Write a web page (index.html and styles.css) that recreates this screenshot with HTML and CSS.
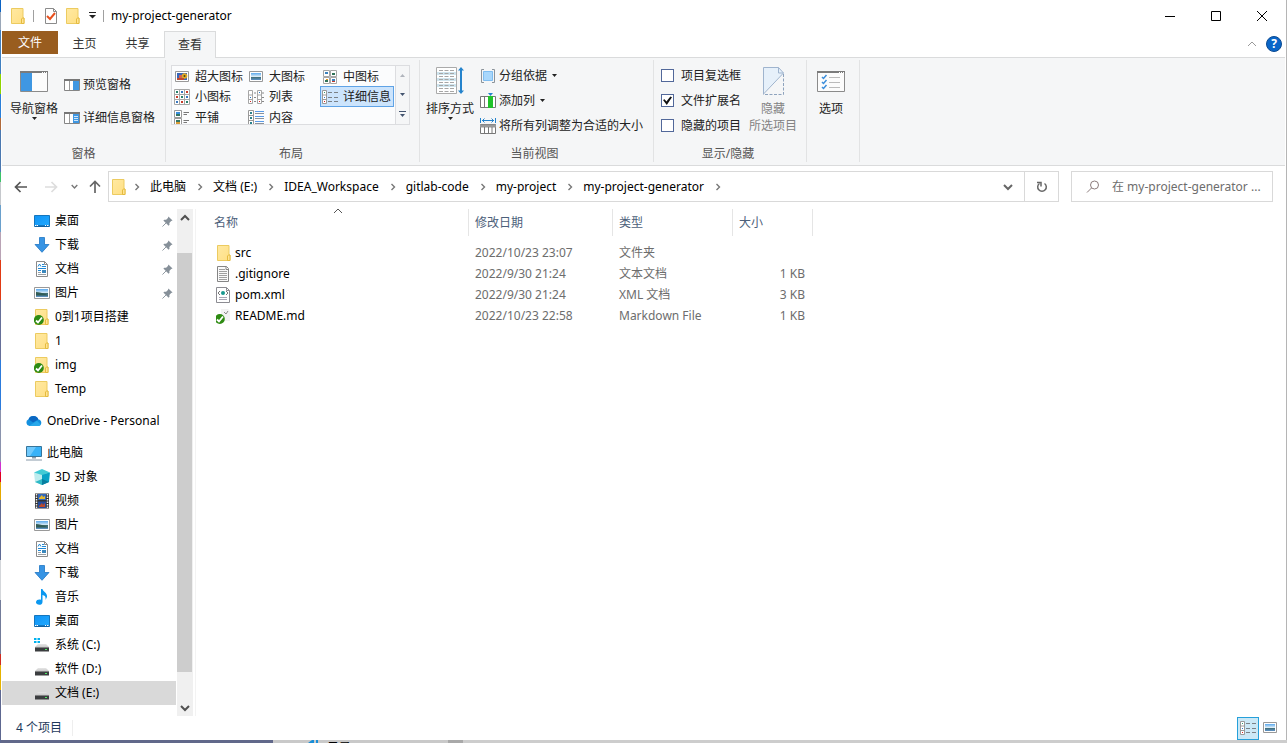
FILE: index.html
```
<!DOCTYPE html>
<html lang="zh-CN">
<head>
<meta charset="utf-8">
<title>my-project-generator</title>
<link rel="stylesheet" href="styles.css">
</head>
<body>
<svg class="sprite" aria-hidden="true">
  <defs>
    <linearGradient id="g-folder" x1="0" y1="0" x2="1" y2="1"><stop offset="0" stop-color="#ffe9a2"/><stop offset="1" stop-color="#ffdf83"/></linearGradient>
    <linearGradient id="g-sky" x1="0" y1="0" x2="0" y2="1"><stop offset="0" stop-color="#5aa9ee"/><stop offset=".5" stop-color="#dcecf5"/><stop offset=".55" stop-color="#3d6a6d"/><stop offset="1" stop-color="#5f93c8"/></linearGradient>
    <linearGradient id="g-desk" x1="0" y1="0" x2="1" y2="1"><stop offset="0" stop-color="#0e93f5"/><stop offset="1" stop-color="#23aaff"/></linearGradient>
    <linearGradient id="g-drive" x1="0" y1="0" x2="0" y2="1"><stop offset="0" stop-color="#e6e6e6"/><stop offset="1" stop-color="#c2c2c2"/></linearGradient>
    <symbol id="folder" viewBox="0 0 16 16"><path d="M1.500 .5h11.500v9.500h1v5.500H1.500z" fill="url(#g-folder)" stroke="#eccb60"/><path d="M11.500 15.500v-4.500l1-1h1.500v5.500z" fill="#ffe494" stroke="#e5bb3f"/></symbol>
    <symbol id="folder-ok" viewBox="0 0 16 16"><use href="#folder"/><use href="#ok"/></symbol>
    <symbol id="ok" viewBox="0 0 16 16"><circle cx="4.800" cy="11" r="5" fill="#2e8b12"/><path d="M2 11.500l2 2 4-5" fill="none" stroke="#fff" stroke-width="1.800"/></symbol>
    <symbol id="desktop" viewBox="0 0 16 16"><path d="M.5 2.500h15v11H.5z" fill="url(#g-desk)" stroke="#1576bd"/><path d="M1 13h14" stroke="#0a4d86"/><path d="M1 12.500h1.500M3 12.500h1M11 12.500h1M13 12.500h1.500" stroke="#fff"/></symbol>
    <symbol id="download" viewBox="0 0 16 16"><path d="M5.500 .5h5v7h4.500L8 15.300 1 7.500h4.500z" fill="#3794e4" stroke="#1f76c4" stroke-width=".8"/></symbol>
    <symbol id="document" viewBox="0 0 16 16"><path d="M2.500 .5h8l3 3v12h-11z" fill="#fff" stroke="#8b8b8b"/><path d="M10.500 .5v3h3" fill="none" stroke="#8b8b8b"/><path d="M4 5.500l1.500-2.500 1.500 2.500M8 3.500h2M8 5.500h4M4 7.500h8M4 9.500h3" stroke="#2089d5" fill="none"/><path d="M8 9h4v3H8z" fill="#3b88bd"/><path d="M4 11.500h3M4 13.500h8" stroke="#9aa0a5"/></symbol>
    <symbol id="picture" viewBox="0 0 16 16"><path d="M.5 2.500h15v11H.5z" fill="#fff" stroke="#999"/><path d="M2 4h12v8H2z" fill="url(#g-sky)"/><path d="M2 7q4 0 12 3v.500H2z" fill="#315c56"/></symbol>
    <symbol id="cloud" viewBox="0 0 16 16"><path d="M3.500 13A3.500 3.500 0 0 1 2.500 6.300 5.300 5.300 0 0 1 12.400 6.500a3.300 3.300 0 0 1 .3 6.500z" fill="#1490df"/><path d="M2.600 6.300A5.300 5.300 0 0 1 12.400 6.500L7 9.500z" fill="#0b67c2"/><path d="M3 13l8-5.300 4 4-2 1.300z" fill="#28a8ea"/></symbol>
    <symbol id="computer" viewBox="0 0 16 16"><path d="M.5 1.500h15v10H.5z" fill="#38b2f8" stroke="#37759a"/><path d="M1 2h9L4 11H1z" fill="#70c9fc"/><path d="M6 12h4v1.500H6zM0 14.500h16v1H0z" fill="#879aaa"/></symbol>
    <symbol id="cube" viewBox="0 0 16 16"><path d="M0 3.500L8 5v11L1 13z" fill="#bdecee"/><path d="M8 5l8-1.500-1 9.500-7 3z" fill="#08a2c5"/><path d="M0 3.500L8 0l8 3.500L8 6z" fill="#42cbd5"/><path d="M1 13l7-3v6z" fill="#2fb9c6"/><path d="M15 13l-7-3v6z" fill="#087e9f"/></symbol>
    <symbol id="video" viewBox="0 0 16 16"><path d="M1 .5h14v15H1z" fill="#343434"/><path d="M4 1h8v6H4z" fill="#3167bd"/><path d="M4 8.500h8V15H4z" fill="#254c9b"/><path d="M5 5l3-3 1 2 2-1v3H5z" fill="#e5b72c"/><path d="M5 13l3-3 1 2 2-2v4H5z" fill="#bc4b2b"/><path d="M2.500 1v14M13.500 1v14" stroke="#eee" stroke-width="1.500" stroke-dasharray="1.500 1"/></symbol>
    <symbol id="music" viewBox="0 0 16 16"><path d="M7 0h1.500c.5 3 5 3.500 4.500 8l-1.500 3C12 7.500 11 6.500 8.500 6v7c0 4-7 3.500-6.500 0 .3-2.300 3-3 5-2.200z" fill="#0b98f0"/></symbol>
    <symbol id="drive" viewBox="0 0 16 16"><path d="M4 7h8l3 3v1H1v-1z" fill="url(#g-drive)"/><path d="M1 10.500h14v4H1z" fill="#3b3d3f"/><path d="M11 12h2v1h-2z" fill="#4ded65"/></symbol>
    <symbol id="drive-win" viewBox="0 0 16 16"><use href="#drive"/><path d="M0 1h2.500v2H0zM3.500 1H6v2H3.500zM0 4h2.500v2H0zM3.500 4H6v2H3.500z" fill="#00b1ee"/></symbol>
    <symbol id="textfile" viewBox="0 0 16 16"><path d="M1.500 .5h9l2 2v13h-11z" fill="#fafafa" stroke="#858585"/><path d="M10 .5v3h3" fill="none" stroke="#858585"/><path d="M3 3.500h6M3 5.500h8M3 7.500h8M3 9.500h8M3 11.500h8M3 13.500h8" stroke="#a0a0a0"/></symbol>
    <symbol id="xmlfile" viewBox="0 0 16 16"><path d="M.5 .5h10l3 3v12H.5z" fill="#fff" stroke="#8c8c92"/><path d="M10.500 .5v3h3" fill="none" stroke="#8c8c92"/><path d="M4 4L2 6l2 2M10 4l2 2-2 2" fill="none" stroke="#777"/><circle cx="7" cy="6" r="2" fill="#1a9990"/><path d="M3 10.500h8M3 12.500h8" stroke="#aaa5b5"/></symbol>
    <symbol id="mdfile" viewBox="0 0 16 16"><path d="M5 1h7l2 2v10H5z" fill="#f2f2f2"/><path d="M8 4l2 2 2-3" fill="none" stroke="#888"/><g transform="translate(-1)"><use href="#ok"/></g></symbol>
    <symbol id="pin" viewBox="0 0 12 12"><path d="M7 .5L11.500 5l-1.500.5-2 2 .2 2-1 1L1.500 5l1-1 2 .2 2-2z" fill="#869099"/><path d="M4.500 7.500L.5 11.500" stroke="#869099"/></symbol>
    <symbol id="chev" viewBox="0 0 8 8"><path d="M2.500 1l3 3-3 3" fill="none" stroke="#777" stroke-width="1.400"/></symbol>
    <symbol id="chev-down" viewBox="0 0 10 10"><path d="M1 3l4 4 4-4" fill="none" stroke="currentColor" stroke-width="2"/></symbol>
    <symbol id="chev-up" viewBox="0 0 10 10"><path d="M1 7l4-4 4 4" fill="none" stroke="currentColor" stroke-width="2"/></symbol>
    <symbol id="chev-up-thin" viewBox="0 0 10 10"><path d="M1 7l4-4 4 4" fill="none" stroke="currentColor"/></symbol>
    <symbol id="tri" viewBox="0 0 5 3"><path d="M0 0h5L2.500 3z" fill="currentColor"/></symbol>
    <symbol id="left" viewBox="0 0 14 14"><path d="M6.500 2L1.500 7l5 5M1.500 7H13" fill="none" stroke="currentColor" stroke-width="1.700"/></symbol>
    <symbol id="right" viewBox="0 0 14 14"><path d="M7.500 2l5 5-5 5M12.500 7H1" fill="none" stroke="currentColor" stroke-width="1.700"/></symbol>
    <symbol id="up" viewBox="0 0 14 14"><path d="M2 6.500l5-5 5 5M7 1.500V13" fill="none" stroke="currentColor" stroke-width="1.700"/></symbol>
    <symbol id="v-details" viewBox="0 0 16 16"><path d="M.5 1.500h4v13h-4zM.5 6h4M.5 10.500h4" fill="#fff" stroke="#9a9a9a"/><path d="M6 3.500h4M12 3.500h4M6 8.500h4M12 8.500h4M6 12.500h4M12 12.500h4" stroke="#7b8187"/><path d="M2 3h1v1H2z" fill="#397"/><path d="M2 8h1v1H2z" fill="#37c"/><path d="M2 12h1v1H2z" fill="#d22"/></symbol>
    <symbol id="v-large" viewBox="0 0 16 16"><path d="M1.500 2.500h13v10h-13z" fill="#fff" stroke="#999"/><path d="M3 4h10v7H3z" fill="url(#g-sky)"/></symbol>
    <symbol id="v-xl" viewBox="0 0 16 16"><path d="M1.500 2.500h13v10h-13z" fill="#fff" stroke="#999"/><path d="M3 4h10v7H3z" fill="#3765b9"/><circle cx="10.500" cy="7" r="2.800" fill="#e0aa24"/><circle cx="10.500" cy="7" r="1" fill="#4b421a"/><path d="M3 9h7v2H3z" fill="#bd4931"/><path d="M5 6h3v3H5z" fill="#d16155"/></symbol>
    <symbol id="v-medium" viewBox="0 0 16 16"><path d="M1.500 1.500h6v6h-6zM8.500 1.500h6v6h-6zM1.500 8.500h6v6h-6zM8.500 8.500h6v6h-6z" fill="#fff" stroke="#a6a6a6"/><path d="M3 3h3v2H3zM10 10h3v2h-3z" fill="#3b82bd"/><path d="M10 4h3v2h-3zM3 11h3v2H3z" fill="#2f7257"/><path d="M4 10h2v1H4z" fill="#e39b23"/><path d="M10 12h3v1h-3z" fill="#c43a2a"/></symbol>
    <symbol id="v-small" viewBox="0 0 16 16"><path d="M.5 .5h15v15H.5zM5.500 .5v15M10.500 .5v15M.5 5.500h15M.5 10.500h15" fill="#fff" stroke="#a6a6a6"/><path d="M2 3h2M7 8h2M12 13h2" stroke="#27806b" stroke-width="2"/><path d="M7 3h2M12 8h2M2 13h2" stroke="#3977c0" stroke-width="2"/><path d="M12 3h2M2 8h2M7 13h2" stroke="#c93b2a" stroke-width="2"/></symbol>
    <symbol id="v-list" viewBox="0 0 16 16"><path d="M.5 1.500h4v13h-4zM.5 6h4M.5 10.500h4M9.500 1.500h4v13h-4zM9.500 6h4M9.500 10.500h4" fill="#fff" stroke="#a6a6a6"/><path d="M6 4h2M6 8.500h2M6 12.500h2M14 4h2M14 8.500h2M14 12.500h2" stroke="#888"/><path d="M2 8h1v1H2zM11 3h1v1h-1z" fill="#27c"/><path d="M2 12h1v1H2zM11 12h1v1h-1z" fill="#d22"/></symbol>
    <symbol id="v-tiles" viewBox="0 0 16 16"><path d="M.5 .5h7v7h-7zM.5 8.500h7v7h-7z" fill="#fff" stroke="#999"/><path d="M2 2h4v2H2z" fill="#398ddd"/><path d="M2 4h4v2H2zM2 10h4v2H2z" fill="#347563"/><path d="M2 12h4v2H2z" fill="#d79b37"/><path d="M9.500 2.500H15M9.500 4.500H13M9.500 10.500H15M9.500 12.500H13" stroke="#777"/></symbol>
    <symbol id="v-content" viewBox="0 0 16 16"><path d="M.5 .5h5v15h-5zM.5 5.500h5M.5 10.500h5" fill="#fff" stroke="#999"/><path d="M2 3h2M2 8h2M2 13h2" stroke="#28808b" stroke-width="2"/><path d="M7 1.500h9M7 6.500h9M7 11.500h9" stroke="#5a9be8"/><path d="M7 3.500h9M7 8.500h9M7 13.500h9" stroke="#8d9299"/></symbol>
  </defs>
</svg>

<div class="window">
  <header class="titlebar">
    <svg class="i16"><use href="#folder"/></svg>
    <span class="bar"></span>
    <div class="quick">
      <button aria-label="属性"><svg class="i16" viewBox="0 0 16 16"><path d="M2.500 .5h8l3 3v12h-11z" fill="#fff" stroke="#8b8b8b"/><path d="M10.500 .5v3h3" fill="none" stroke="#8b8b8b"/><path d="M4 8l3 3 5-6" fill="none" stroke="#e8501e" stroke-width="2"/></svg></button>
      <button aria-label="新建文件夹"><svg class="i16"><use href="#folder"/></svg></button>
      <button class="customize" aria-label="自定义快速访问工具栏"><svg width="7" height="7" viewBox="0 0 7 7"><path d="M0 .5h7" stroke="#222"/><path d="M0 3h7L3.500 6.500z" fill="#222"/></svg></button>
    </div>
    <span class="bar"></span>
    <h1 class="title">my-project-generator</h1>
    <div class="controls">
      <button aria-label="最小化"><svg width="10" height="10"><path d="M0 5.500h10" stroke="#000"/></svg></button>
      <button aria-label="最大化"><svg width="10" height="10"><path d="M.5 .5h9v9h-9z" fill="none" stroke="#000"/></svg></button>
      <button aria-label="关闭"><svg width="10" height="10"><path d="M0 0l10 10M10 0L0 10" stroke="#000"/></svg></button>
    </div>
  </header>

  <nav class="tabs">
    <button class="tab file">文件</button>
    <button class="tab">主页</button>
    <button class="tab">共享</button>
    <button class="tab active">查看</button>
    <div class="tabs-end">
      <button class="collapse" aria-label="最小化功能区"><svg width="10" height="10"><use href="#chev-up-thin"/></svg></button>
      <button class="help" aria-label="帮助">?</button>
    </div>
  </nav>

  <section class="ribbon">
    <div class="group panes">
      <div class="group-body">
        <button class="big">
          <span class="art"><svg width="28" height="21" viewBox="0 0 28 21"><path d="M.5 .5h27v20H.5z" fill="#fcfcfc" stroke="#8b8b8b"/><path d="M0 1h28" stroke="#7b7b7b" stroke-width="2"/><path d="M22 1.500h1M24 1.500h1M26 1.500h1" stroke="#fff"/><path d="M1 2h11v18H1z" fill="#3f97e2"/></svg></span>
          <span>导航窗格</span><svg class="tri"><use href="#tri"/></svg>
        </button>
        <div class="pane-list">
          <button class="row"><svg class="i16" viewBox="0 0 16 16"><path d="M.5 2.500h15v11H.5z" fill="#fff" stroke="#858585"/><path d="M0 3h16" stroke="#777" stroke-width="2"/><path d="M5.500 4v9" stroke="#999"/><path d="M9 4h6v9H9z" fill="#3f97e2"/></svg>预览窗格</button>
          <button class="row"><svg class="i16" viewBox="0 0 16 16"><path d="M.5 2.500h15v11H.5z" fill="#fff" stroke="#858585"/><path d="M0 3h16" stroke="#777" stroke-width="2"/><path d="M5.500 4v9" stroke="#999"/><path d="M9 4h6v9H9z" fill="#3f97e2"/><path d="M10 6.500h4M10 8.500h4M10 10.500h4" stroke="#cfe6fa"/></svg>详细信息窗格</button>
        </div>
      </div>
      <div class="group-label">窗格</div>
    </div>

    <div class="group layout">
      <div class="group-body">
        <div class="gallery">
          <div class="cells">
            <button class="cell"><svg class="i16"><use href="#v-xl"/></svg>超大图标</button>
            <button class="cell"><svg class="i16"><use href="#v-large"/></svg>大图标</button>
            <button class="cell"><svg class="i16"><use href="#v-medium"/></svg>中图标</button>
            <button class="cell"><svg class="i16"><use href="#v-small"/></svg>小图标</button>
            <button class="cell"><svg class="i16"><use href="#v-list"/></svg>列表</button>
            <button class="cell selected"><svg class="i16"><use href="#v-details"/></svg>详细信息</button>
            <button class="cell"><svg class="i16"><use href="#v-tiles"/></svg>平铺</button>
            <button class="cell"><svg class="i16"><use href="#v-content"/></svg>内容</button>
          </div>
          <div class="spin">
            <button class="dim" aria-label="上一行"><svg width="5" height="3" viewBox="0 0 5 3"><path d="M0 3h5L2.500 0z" fill="currentColor"/></svg></button>
            <button aria-label="下一行"><svg width="5" height="3"><use href="#tri"/></svg></button>
            <button aria-label="更多"><svg width="7" height="7" viewBox="0 0 7 7"><path d="M0 .5h7" stroke="currentColor"/><path d="M1 3h5L3.500 6z" fill="currentColor"/></svg></button>
          </div>
        </div>
      </div>
      <div class="group-label">布局</div>
    </div>

    <div class="group view">
      <div class="group-body">
        <button class="big">
          <span class="art"><svg width="28" height="28" viewBox="0 0 28 28"><path d="M.5 .5h20v26H.5z" fill="#fff" stroke="#aaa"/><path d="M1 5h19v3H1zM1 11h19v3H1zM1 17h19v3H1z" fill="#cfe5ef"/><path d="M3 3.500h15M3 6.500h15M3 9.500h15M3 12.500h15M3 15.500h15M3 18.500h15M3 21.500h15M3 24.500h15" stroke="#a6a6a6" stroke-dasharray="4 1.500"/><path d="M25 2v23" stroke="#2583cc" stroke-width="2"/><path d="M22 3.500L25 0l3 3.500zM22 23.500l3 3.500 3-3.500z" fill="#2583cc"/></svg></span>
          <span>排序方式</span><svg class="tri"><use href="#tri"/></svg>
        </button>
        <div class="rows">
          <button class="row"><svg class="i16" viewBox="0 0 16 16"><path d="M4 1.500H1.500v13H4M12 1.500h2.500v13H12" fill="none" stroke="#8c949b"/><path d="M3.500 3.500h9v9h-9z" fill="#a9d7fb" stroke="#7fbdf0"/></svg>分组依据<svg class="tri"><use href="#tri"/></svg></button>
          <button class="row"><svg class="i16" viewBox="0 0 16 16"><path d="M.5 3.500h15v11H.5zM4.500 4v10M8.500 4v10" fill="#fff" stroke="#777"/><path d="M8 3h5v12H8z" fill="#20c229"/><path d="M8 0h5l-2.500 3z" fill="#2583cc"/></svg>添加列<svg class="tri"><use href="#tri"/></svg></button>
          <button class="row"><svg class="i16" viewBox="0 0 16 16"><path d="M.5 0v5M15.500 0v5M2 2.500h12M4.500 .5l-2 2 2 2M11.500 .5l2 2-2 2" fill="none" stroke="#2583cc"/><path d="M.5 6.500h15v9H.5z" fill="#fff" stroke="#777"/><path d="M0 8h16" stroke="#999" stroke-width="3"/><path d="M4.500 9v6M8.500 9v6M12 9v6" stroke="#777"/></svg>将所有列调整为合适的大小</button>
        </div>
      </div>
      <div class="group-label">当前视图</div>
    </div>

    <div class="group show">
      <div class="group-body">
        <div class="rows">
          <label class="check"><input type="checkbox">项目复选框</label>
          <label class="check"><input type="checkbox" checked>文件扩展名</label>
          <label class="check"><input type="checkbox">隐藏的项目</label>
        </div>
        <button class="big" disabled>
          <span class="art"><svg width="21" height="28" viewBox="0 0 21 28"><path d="M.5 26V.5h15l5 5.500z" fill="#e6f0fa"/><path d="M.5 27V.5h15l5 5.500L.5 27M15.500 .5V6h5" fill="none" stroke="#9fb4ce"/><path d="M20.500 7v20.500H0" fill="none" stroke="#8ea3bd" stroke-dasharray="3 1.500"/></svg></span>
          <span>隐藏</span><span>所选项目</span>
        </button>
      </div>
      <div class="group-label">显示/隐藏</div>
    </div>

    <div class="group options">
      <div class="group-body">
        <button class="big">
          <span class="art"><svg width="28" height="21" viewBox="0 0 28 21"><path d="M.5 .5h27v20H.5z" fill="#fcfcfc" stroke="#8b8b8b"/><path d="M0 1h28" stroke="#7b7b7b" stroke-width="2"/><path d="M22 1.500h1M24 1.500h1M26 1.500h1" stroke="#fff"/><path d="M12 6.500h11M12 11.500h11M12 16.500h11" stroke="#bbb"/><path d="M5 6l1.500 1.500L9.500 4M5 11l1.500 1.500L9.500 9M5 16l1.500 1.500L9.500 14" fill="none" stroke="#3c8edb" stroke-width="1.500"/></svg></span>
          <span>选项</span>
        </button>
      </div>
    </div>
  </section>

  <div class="address-bar">
    <div class="history">
      <button aria-label="返回"><svg width="14" height="14"><use href="#left"/></svg></button>
      <button class="forward" aria-label="前进" disabled><svg width="14" height="14"><use href="#right"/></svg></button>
      <button class="recent" aria-label="最近浏览的位置"><svg width="7" height="7"><use href="#chev-down"/></svg></button>
      <button class="up" aria-label="上移"><svg width="14" height="14"><use href="#up"/></svg></button>
    </div>
    <div class="path">
      <svg class="i16"><use href="#folder"/></svg>
      <svg class="sep first"><use href="#chev"/></svg>
      <a href="#">此电脑</a><svg class="sep"><use href="#chev"/></svg>
      <a href="#">文档 (E:)</a><svg class="sep"><use href="#chev"/></svg>
      <a href="#">IDEA_Workspace</a><svg class="sep"><use href="#chev"/></svg>
      <a href="#">gitlab-code</a><svg class="sep"><use href="#chev"/></svg>
      <a href="#">my-project</a><svg class="sep"><use href="#chev"/></svg>
      <a href="#">my-project-generator</a><svg class="sep"><use href="#chev"/></svg>
      <button class="drop" aria-label="以前的位置"><svg width="10" height="10"><use href="#chev-down"/></svg></button>
      <button class="refresh" aria-label="刷新"><svg width="12" height="12" viewBox="0 0 12 12"><path d="M3.500 2.500A4.300 4.300 0 1 0 8.500 2.500" fill="none" stroke="#666" stroke-width="1.500"/><path d="M1 1.500h4v4" fill="none" stroke="#666" stroke-width="1.500"/></svg></button>
    </div>
    <div class="search">
      <svg width="14" height="14" viewBox="0 0 14 14"><circle cx="8.500" cy="5" r="4" fill="none" stroke="#8b7b7b"/><path d="M5.500 8L1 12.500" stroke="#8b7b7b"/></svg>
      <input type="text" aria-label="搜索" placeholder="在 my-project-generator ...">
    </div>
  </div>

  <main class="main">
    <nav class="tree">
      <a href="#"><svg class="i16"><use href="#desktop"/></svg>桌面<svg class="pin"><use href="#pin"/></svg></a>
      <a href="#"><svg class="i16"><use href="#download"/></svg>下载<svg class="pin"><use href="#pin"/></svg></a>
      <a href="#"><svg class="i16"><use href="#document"/></svg>文档<svg class="pin"><use href="#pin"/></svg></a>
      <a href="#"><svg class="i16"><use href="#picture"/></svg>图片<svg class="pin"><use href="#pin"/></svg></a>
      <a href="#"><svg class="i16"><use href="#folder-ok"/></svg>0到1项目搭建</a>
      <a href="#"><svg class="i16"><use href="#folder"/></svg>1</a>
      <a href="#"><svg class="i16"><use href="#folder-ok"/></svg>img</a>
      <a href="#"><svg class="i16"><use href="#folder"/></svg>Temp</a>
      <a href="#" class="root"><svg class="i16"><use href="#cloud"/></svg>OneDrive - Personal</a>
      <a href="#" class="root"><svg class="i16"><use href="#computer"/></svg>此电脑</a>
      <a href="#"><svg class="i16"><use href="#cube"/></svg>3D 对象</a>
      <a href="#"><svg class="i16"><use href="#video"/></svg>视频</a>
      <a href="#"><svg class="i16"><use href="#picture"/></svg>图片</a>
      <a href="#"><svg class="i16"><use href="#document"/></svg>文档</a>
      <a href="#"><svg class="i16"><use href="#download"/></svg>下载</a>
      <a href="#"><svg class="i16"><use href="#music"/></svg>音乐</a>
      <a href="#"><svg class="i16"><use href="#desktop"/></svg>桌面</a>
      <a href="#"><svg class="i16"><use href="#drive-win"/></svg>系统 (C:)</a>
      <a href="#"><svg class="i16"><use href="#drive"/></svg>软件 (D:)</a>
      <a href="#" class="current"><svg class="i16"><use href="#drive"/></svg>文档 (E:)</a>
    </nav>
    <div class="scrollbar">
      <button aria-label="向上滚动"><svg width="10" height="10"><use href="#chev-up"/></svg></button>
      <div class="track"><div class="thumb"></div></div>
      <button aria-label="向下滚动"><svg width="10" height="10"><use href="#chev-down"/></svg></button>
    </div>
    <div class="files">
      <table>
        <colgroup><col class="c-name"><col class="c-date"><col class="c-type"><col class="c-size"></colgroup>
        <thead>
          <tr><th>名称<svg class="sort" width="10" height="10"><use href="#chev-up-thin"/></svg></th><th>修改日期</th><th>类型</th><th>大小</th></tr>
        </thead>
        <tbody>
          <tr><td><span class="name"><svg class="i16"><use href="#folder"/></svg>src</span></td><td>2022/10/23 23:07</td><td>文件夹</td><td></td></tr>
          <tr><td><span class="name"><svg class="i16"><use href="#textfile"/></svg>.gitignore</span></td><td>2022/9/30 21:24</td><td>文本文档</td><td>1 KB</td></tr>
          <tr><td><span class="name"><svg class="i16"><use href="#xmlfile"/></svg>pom.xml</span></td><td>2022/9/30 21:24</td><td>XML 文档</td><td>3 KB</td></tr>
          <tr><td><span class="name"><svg class="i16"><use href="#mdfile"/></svg>README.md</span></td><td>2022/10/23 22:58</td><td>Markdown File</td><td>1 KB</td></tr>
        </tbody>
      </table>
    </div>
  </main>

  <footer class="status">
    <span class="count">4 个项目</span>
    <button class="mode on" aria-label="详细信息"><svg class="i16"><use href="#v-details"/></svg></button>
    <button class="mode" aria-label="大图标"><svg class="i16"><use href="#v-large"/></svg></button>
  </footer>
</div>
<div class="behind"><svg width="12" height="3" viewBox="0 0 12 3"><path d="M0 3l4-3h2v3zM8 0h2v3H8z" fill="#1a8fd8"/></svg><span>目录</span></div>
</body>
</html>
```
FILE: styles.css
```
* { box-sizing: border-box; }

body {
  margin: 0;
  height: 100vh;
  display: flex;
  flex-direction: column;
  overflow: hidden;
  padding: 0 0 0 1px;
  background: linear-gradient(#0b63c4 0 12px, #9aa7b8 12px 30px, #3f7fc0 30px 74px, #8fd400 74px 94px, #2a7fd8 94px 118px, #b06a3a 118px 130px, #4a78b0 130px 172px, #3cc46a 172px 182px, #c5c8cc 182px 205px, #6aa0cc 205px 232px, #b9a3b5 232px 260px, #e03a14 260px 300px, #66709a 300px 360px, #2c7bdc 360px 410px, #8a93ad 410px 462px, #d030d0 462px 472px, #e00020 472px 482px, #e5a800 482px 500px, #5f6b95 500px 560px, #d3d6da 560px 600px, #737c9a 600px 654px, #d02c20 654px 665px, #e5b200 665px 690px, #5d6790 690px);
  color: #000;
  font: 12px/16px "Noto Sans", "Noto Sans CJK SC", sans-serif;
}

button, input { font: inherit; color: inherit; }

button {
  display: flex;
  align-items: center;
  justify-content: center;
  margin: 0;
  padding: 0;
  border: 0;
  background: none;
  white-space: nowrap;
}

a { color: inherit; text-decoration: none; }
svg { display: block; flex: none; }
.sprite { position: absolute; width: 0; height: 0; }
.i16 { width: 16px; height: 16px; }
.tri { width: 5px; height: 3px; }

.window {
  flex: 1;
  min-height: 0;
  display: flex;
  flex-direction: column;
  padding: 0 1px;
  border-right: 1px solid #b5b5b5;
  background: #fff;
}

/* Title bar */
.titlebar { display: flex; align-items: center; height: 31px; padding-left: 8px; flex: none; }
.bar { width: 1px; height: 12px; margin: 0 7px; background: #a0a0a0; }
.quick { display: flex; gap: 6px; margin-left: 2px; }
.customize { margin-left: 2px; }
.title { margin: 0; font-size: 12px; font-weight: 400; }
.controls { display: flex; align-self: stretch; margin-left: auto; }
.controls button { width: 46px; }

/* Tabs */
.tabs { display: flex; height: 27px; flex: none; border-bottom: 1px solid #dadbdc; }
.tab { width: 53px; height: 26px; color: #333; }
.tab.file { width: 56px; height: 23px; background: #995d1f; color: #fff; }
.tab.active { width: 52px; height: 27px; border: 1px solid #dadbdc; border-bottom: 0; background: #f5f6f7; }
.tabs-end { display: flex; align-items: center; gap: 9px; margin-left: auto; padding-right: 3px; }
.collapse { color: #999; }
.help { width: 16px; height: 16px; border: 1px solid #0b4a91; border-radius: 50%; background: #0a66c8; color: #fff; font-weight: 700; }

/* Ribbon */
.ribbon { display: flex; height: 108px; flex: none; padding: 2px 0 3px; border-bottom: 1px solid #dadbdc; background: #f5f6f7; color: #222; }
.group { display: flex; flex-direction: column; border-right: 1px solid #e2e3e4; padding: 3px 6px 0; }
.group-body { display: flex; flex: 1; }
.group-label { height: 16px; text-align: center; color: #555; }
.panes { width: 164px; }
.layout { width: 254px; padding: 3px 8px 0 5px; }
.view { width: 234px; padding: 3px 8px 0 4px; }
.show { width: 153px; }
.show .group-label { padding-right: 4px; }
.options { width: 53px; padding: 3px 8px 0 4px; }

.big { flex-direction: column; justify-content: flex-start; width: 52px; padding-top: 3px; line-height: 17px; }
.big:disabled { color: #838383; }
.art { display: flex; align-items: center; height: 30px; margin-bottom: 4px; }
.row { justify-content: flex-start; gap: 3px; }
.row .tri { margin-left: 2px; }
.pane-list { display: grid; grid-auto-rows: 33px; margin-top: 5px; margin-left: 4px; }
.rows { display: grid; grid-template-rows: repeat(3, 25px); }
.view .rows { margin-left: 4px; }
.check { display: flex; align-items: center; gap: 7px; margin-left: 1px; }
.check input { appearance: none; position: relative; width: 13px; height: 13px; margin: 0; border: 1px solid #52689a; background: #fff; }
.check input:checked::after { content: ""; position: absolute; inset: 1px; background: #111; clip-path: polygon(0 45%, 18% 35%, 38% 62%, 82% 5%, 100% 15%, 42% 100%); }
.show .big { margin-left: 6px; }
.options .big { width: 40px; }

.gallery { display: flex; align-self: flex-start; flex: none; width: 239px; height: 60px; margin-top: 2px; border: 1px solid #dcdde0; background: #fbfcfd; overflow: hidden; }
.cells { display: grid; grid-template-columns: repeat(3, 74px); grid-template-rows: 20px 21px 17px; flex: 1; }
.cell { height: 21px; justify-content: flex-start; gap: 5px; padding-left: 2px; }
.cell.selected { padding-left: 1px; border: 1px solid #5fa3e6; background: #cce4fc; }
.spin { display: grid; grid-template-rows: repeat(3, 1fr); width: 14px; border-left: 1px solid #dcdde0; background: #f5f6f7; color: #44546f; }
.spin .dim { color: #b0b4bc; }

/* Address bar */
.address-bar { display: flex; height: 43px; flex: none; padding: 5px 12px 7px 0; }
.history { display: flex; align-items: center; width: 106px; padding-left: 12px; color: #555; }
.forward { margin-left: 16px; color: #ddd; }
.recent { margin-left: 13px; color: #777; }
.up { margin-left: 10px; color: #666; }
.path { flex: 1; min-width: 0; display: flex; align-items: center; border: 1px solid #d9d9d9; padding-left: 2px; white-space: nowrap; }
.sep { width: 8px; height: 8px; margin: 0 9px 0 10px; }
.sep.first { margin: 0 9px 0 6px; }
.drop { width: 32px; margin-left: auto; color: #666; }
.refresh { align-self: stretch; width: 34px; border-left: 1px solid #d9d9d9; }
.search { display: flex; align-items: center; gap: 12px; width: 202px; margin-left: 12px; padding-left: 14px; border: 1px solid #d9d9d9; }
.search input { flex: 1; min-width: 0; padding: 0; border: 0; outline: 0; background: none; }
.search input::placeholder { color: #6d6d6d; opacity: 1; }

/* Main area */
.main { display: flex; flex: 1; min-height: 0; }
.tree { width: 174px; overflow: hidden; }
.tree a { display: flex; align-items: center; gap: 5px; height: 24px; padding-left: 32px; white-space: nowrap; }
.tree .root { margin-top: 8px; padding-left: 24px; }
.tree .current { background: #d9d9d9; }
.pin { width: 11px; height: 11px; margin-left: auto; margin-right: 3px; }
.scrollbar { display: flex; flex-direction: column; width: 16px; margin-left: 1px; background: #f0f0f0; color: #505050; }
.scrollbar button { height: 17px; }
.track { flex: 1; display: flex; flex-direction: column; padding: 27px 1px 27px 0; }
.thumb { flex: 1; background: #cdcdcd; }
.files { flex: 1; margin-left: 2px; padding-left: 12px; border-left: 1px solid #f3f3f3; overflow: hidden; }

table { table-layout: fixed; width: 605px; border-collapse: separate; border-spacing: 0; color: #6d6d6d; }
.c-name { width: 261px; }
.c-date { width: 144px; }
.c-type { width: 120px; }
.c-size { width: 80px; }
th { position: relative; height: 27px; padding: 0 6px; border-right: 1px solid #e5e5e5; color: #4c607a; font-weight: 400; text-align: left; }
.sort { position: absolute; top: -3px; left: 50%; margin-left: -5px; color: #555; }
tbody::before { content: ""; display: block; height: 6px; }
td { height: 21px; padding: 0 6px; }
td:last-child { text-align: right; padding-right: 8px; }
.name { display: flex; align-items: center; gap: 3px; padding-left: 2px; color: #000; }

/* Status bar */
.status { display: flex; align-items: center; gap: 3px; height: 24px; flex: none; padding-right: 7px; color: #1e395b; }
.count { margin-right: auto; padding: 0 10px 0 14px; border-right: 1px solid #eee; }
.mode.on { width: 22px; height: 23px; border: 1px solid #26a0da; background: #cbe8f6; }

/* Strip of the window that lies behind */
.behind { display: flex; gap: 7px; height: 3px; flex: none; overflow: hidden; padding-left: 307px; background: linear-gradient(90deg, #61688a 272px, #c9c9c9 272px 447px, #a9a9a9 447px 462px, #cdcdcd 462px); }
```
